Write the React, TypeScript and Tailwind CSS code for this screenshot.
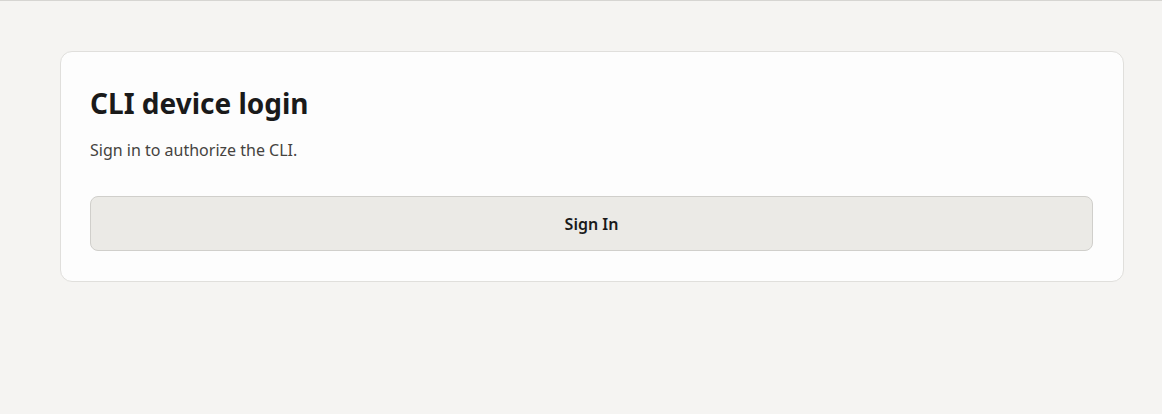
export default function App() {
  return (
    <div className="min-h-[414px] bg-[#f5f4f2] border-t border-[#d6d5d2] font-['Noto_Sans',sans-serif]">
      <div className="ml-[60px] mt-[50px] w-[1064px] rounded-xl border border-[#e0dfdc] bg-[#fdfdfd] pl-[29px] pr-[30px] pt-[29px] pb-[30px]">
        <h1 className="text-[28px] font-bold leading-[44px] text-[#1a1a1a]">CLI device login</h1>
        <p className="mt-[13px] text-[16px] leading-[24px] text-[#45433f]">Sign in to authorize the CLI.</p>
        <button className="mt-[34px] flex h-[55px] w-full items-center justify-center rounded-lg border border-[#d0cfcb] bg-[#ebeae6] text-[16px] font-semibold text-[#1a1a1a]">
          Sign In
        </button>
      </div>
    </div>
  )
}
